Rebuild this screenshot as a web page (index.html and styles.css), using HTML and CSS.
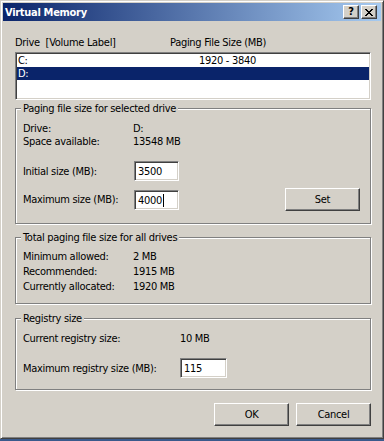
FILE: index.html
```html
<!DOCTYPE html>
<html>
<head>
<meta charset="utf-8">
<title>Virtual Memory</title>
<link rel="stylesheet" href="styles.css">
</head>
<body>
<div class="window">
  <div class="titlebar">
    <span class="title">Virtual Memory</span>
    <div class="cap-buttons">
      <div class="cap-btn help">?</div>
      <div class="cap-btn close">
        <svg width="8" height="7" viewBox="0 0 8 7"><path d="M0 0h2v1h1v1h2V1h1V0h2v1H7v1H6v1H5v1h1v1h1v1h1v1H6V6H5V5H3v1H2v1H0V6h1V5h1V4h1V3H2V2H1V1H0z" fill="#000"/></svg>
      </div>
    </div>
  </div>
  <div class="content">
    <div class="list-head"><span class="col-drive">Drive  [Volume Label]</span><span class="col-size">Paging File Size (MB)</span></div>
    <div class="listbox">
      <div class="list-row"><span class="c1">C:</span><span class="c2">1920 - 3840</span></div>
      <div class="list-row selected"><span class="c1">D:</span><span class="c2"></span></div>
    </div>

    <div class="group g1">
      <div class="group-title">Paging file size for selected drive</div>
      <div class="kv first-7"><span class="k">Drive:</span><span>D:</span></div>
      <div class="kv"><span class="k">Space available:</span><span>13548 MB</span></div>
      <div class="field-row gap-13"><span class="k k-edit">Initial size (MB):</span><div class="edit"><span>3500</span></div></div>
      <div class="field-row tall gap-7"><span class="k k-edit">Maximum size (MB):</span><div class="edit"><span>4000</span><span class="caret"></span></div><button class="btn push-right">Set</button></div>
    </div>

    <div class="group g2">
      <div class="group-title">Total paging file size for all drives</div>
      <div class="kv loose first-5"><span class="k">Minimum allowed:</span><span>2 MB</span></div>
      <div class="kv loose"><span class="k">Recommended:</span><span>1915 MB</span></div>
      <div class="kv loose"><span class="k">Currently allocated:</span><span>1920 MB</span></div>
    </div>

    <div class="group g3">
      <div class="group-title">Registry size</div>
      <div class="kv first-7"><span class="k wide">Current registry size:</span><span>10 MB</span></div>
      <div class="field-row gap-13"><span class="k wide">Maximum registry size (MB):</span><div class="edit reg"><span>115</span></div></div>
    </div>

    <div class="footer">
      <button class="btn">OK</button>
      <button class="btn">Cancel</button>
    </div>
  </div>
</div>
</body>
</html>
```
FILE: styles.css
```css
* { box-sizing: border-box; }
html, body { margin: 0; padding: 0; }
body {
  background: #3a5a8c;
  width: 384px;
  height: 441px;
  overflow: hidden;
  font-family: "DejaVu Sans Condensed", "Liberation Sans", sans-serif;
  font-size: 11px;
  line-height: 13px;
  letter-spacing: -0.3px;
  color: #000;
}
.window {
  width: 384px;
  height: 439px;
  background: #d4d0c8;
  border: 1px solid;
  border-color: #d4d0c8 #404040 #404040 #d4d0c8;
  box-shadow: inset 1px 1px #fff, inset -1px -1px #808080;
  padding: 2px;
}
.titlebar {
  height: 18px;
  display: flex;
  align-items: center;
  background: linear-gradient(to right, #0a246a, #a6caf0);
  padding-left: 2px;
}
.title { color: #fff; font-weight: bold; flex: 1; }
.cap-buttons { display: flex; gap: 2px; margin-right: 4px; }
.cap-btn {
  width: 16px;
  height: 14px;
  background: #d4d0c8;
  border: 1px solid;
  border-color: #fff #404040 #404040 #fff;
  box-shadow: inset -1px -1px #808080;
  display: flex;
  align-items: center;
  justify-content: center;
  font-weight: bold;
  font-size: 11px;
  line-height: 12px;
  letter-spacing: 0;
}
.cap-btn svg { display: block; }

.content { padding: 15px 10px 0 12px; }
.list-head { display: flex; white-space: pre; }
.col-drive { width: 155px; }
.listbox {
  margin-top: 3px;
  height: 48px;
  background: #fff;
  border: 1px solid;
  border-color: #808080 #fff #fff #808080;
  box-shadow: inset 1px 1px #404040, inset -1px -1px #d4d0c8;
  padding: 1px;
}
.list-row { display: flex; height: 13px; padding-left: 1px; }
.list-row .c1 { width: 181px; }
.list-row.selected { background: #0a246a; color: #fff; }

.group {
  border: 1px solid #808080;
  box-shadow: 1px 1px 0 #fff, inset 1px 1px 0 #fff;
  padding: 0 10px 0 7px;
}
.group-title {
  width: max-content;
  margin: -7px 0 0 -2px;
  padding: 0 2px;
  background: #d4d0c8;
  line-height: 13px;
}
.g1 { margin-top: 8px; padding-bottom: 12px; }
.g2 { margin-top: 13px; padding-bottom: 9px; }
.g3 { margin-top: 14px; padding-bottom: 11px; }

.kv { display: flex; }
.kv.loose { line-height: 15px; }
.k { width: 110px; flex: none; }
.k.k-edit { width: 111px; }
.k.wide { width: 157px; }
.first-7 { margin-top: 7px; }
.first-5 { margin-top: 5px; }
.gap-13 { margin-top: 13px; }
.gap-7 { margin-top: 7px; }

.field-row { display: flex; align-items: center; height: 20px; }
.field-row.tall { height: 23px; }
.edit {
  width: 45px;
  height: 20px;
  background: #fff;
  border: 1px solid;
  border-color: #808080 #fff #fff #808080;
  box-shadow: inset 1px 1px #404040, inset -1px -1px #d4d0c8;
  padding: 3px 2px 0 3px;
  display: flex;
  align-items: flex-start;
}
.edit.reg { width: 47px; }
.caret { display: inline-block; width: 1px; height: 13px; background: #000; margin-left: 1px; }

.btn {
  width: 75px;
  height: 23px;
  background: #d4d0c8;
  border: 1px solid;
  border-color: #fff #404040 #404040 #fff;
  box-shadow: inset -1px -1px #808080;
  font: inherit;
  letter-spacing: inherit;
  color: #000;
  padding: 0;
}
.push-right { margin-left: auto; }

.footer { display: flex; justify-content: flex-end; gap: 7px; margin-top: 13px; }
```
